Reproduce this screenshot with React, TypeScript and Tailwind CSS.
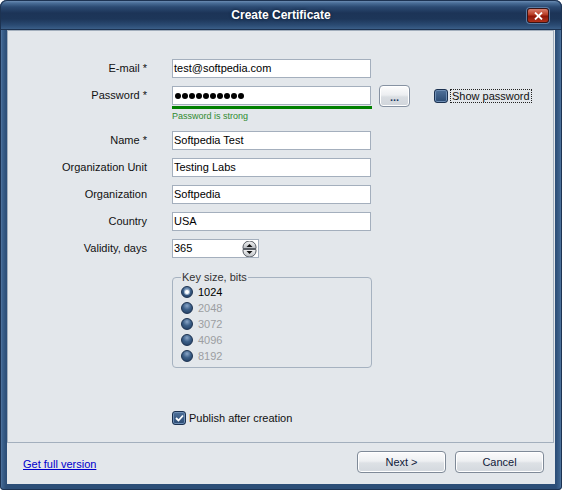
import React from "react";

function Radio({ checked }: { checked?: boolean }) {
  return (
    <span className="flex h-[12px] w-[12px] items-center justify-center rounded-full border border-[#1b3150] bg-[radial-gradient(circle_at_50%_28%,#8aa6c8_0%,#3c5f88_45%,#1f3a5e_100%)]">
      {checked && (
        <span className="h-[4px] w-[4px] rounded-full bg-white shadow-[0_0_0_1px_#9fb4cd]" />
      )}
    </span>
  );
}

function Check({ checked }: { checked?: boolean }) {
  return (
    <span className="flex h-[14px] w-[14px] items-center justify-center rounded-[3px] border border-[#1b3150] bg-[linear-gradient(to_bottom,#4f719a,#2b4b73)] shadow-[inset_0_0_0_1px_#6f8fb5]">
      {checked && (
        <svg width="9" height="8" viewBox="0 0 9 8">
          <path d="M1 4 L3.5 6.5 L8 1.5" stroke="#ffffff" strokeWidth="1.8" fill="none" />
        </svg>
      )}
    </span>
  );
}

function Row({ label, children }: { label: string; children: React.ReactNode }) {
  return (
    <div className="flex h-[19px] items-center">
      <div className="w-[139px] text-right text-[11px] text-[#111]">{label}</div>
      <div className="ml-[25px] flex items-center">{children}</div>
    </div>
  );
}

function Input({ value, w = 199 }: { value: string; w?: number }) {
  return (
    <div
      className="h-[19px] border border-[#a4afbd] bg-white pl-[1px] text-[11px] leading-[17px] text-black"
      style={{ width: w }}
    >
      {value}
    </div>
  );
}

function Btn({ children }: { children: React.ReactNode }) {
  return (
    <button className="h-[22px] w-[89px] rounded-[4px] border border-[#7f8a98] bg-[linear-gradient(to_bottom,#fbfbfc_0%,#eef0f2_45%,#dde1e5_55%,#d3d8de_100%)] text-[11px] text-[#10203a] shadow-[inset_0_0_0_1px_#ffffff]">
      {children}
    </button>
  );
}

export default function App() {
  return (
    <div className="flex h-[490px] w-[562px] flex-col rounded-t-[7px] rounded-b-[4px] bg-[linear-gradient(to_right,#6e8fb6_0px,#3f6590_2px,#2d4f78_6px,#2d4f78_556px,#3f6590_560px,#6e8fb6_562px)] font-['Liberation_Sans',Arial,sans-serif] shadow-[inset_0_0_0_1px_#1d3352]">
      {/* Title bar */}
      <div className="relative flex h-[30px] items-center justify-center rounded-t-[7px] bg-[linear-gradient(to_bottom,#7b9bc0_0px,#4a6e98_3px,#2b4a72_7px,#1c3457_13px,#1d3659_19px,#2a4a72_25px,#3e638d_30px)] shadow-[inset_0_0_0_1px_#1d3352]">
        <span className="text-[12px] font-bold text-white [text-shadow:0_0_3px_#0b1a30]">
          Create Certificate
        </span>
        <div className="absolute left-[527px] top-[8px] flex h-[15px] w-[22px] items-center justify-center rounded-[3px] border border-[#3b1414] bg-[linear-gradient(to_bottom,#d9806f_0%,#b83a22_45%,#8e1608_55%,#b0331c_100%)] shadow-[0_0_0_1px_#5d7ea5]">
          <svg width="9" height="8" viewBox="0 0 9 8">
            <path d="M1 0.5 L8 7.5 M8 0.5 L1 7.5" stroke="#ffffff" strokeWidth="1.8" />
          </svg>
        </div>
      </div>

      {/* Client area */}
      <div className="mx-[7px] mb-[6px] flex flex-1 flex-col bg-[#e3e7eb]">
        <div className="h-[413px] w-[547px] border border-[#a3afbd] pt-[28px]">
          <div className="flex flex-col gap-[8px]">
            <Row label="E-mail *">
              <Input value="test@softpedia.com" />
            </Row>
            <div className="flex flex-col">
              <Row label="Password *">
                <div className="flex h-[19px] w-[199px] items-center gap-[1px] border border-[#a4afbd] bg-white pl-[2px]">
                  {Array.from({ length: 10 }).map((_, i) => (
                    <span key={i} className="h-[6px] w-[6px] rounded-full bg-black" />
                  ))}
                </div>
                <button className="ml-[8px] flex h-[22px] w-[31px] items-end justify-center rounded-[4px] border border-[#8692a2] bg-[linear-gradient(to_bottom,#fdfdfd_0%,#eceef1_45%,#d9dde2_55%,#d0d5db_100%)] pb-[4px] text-[11px] font-bold leading-[10px] text-[#1f3a64] shadow-[inset_0_0_0_1px_#ffffff]">
                  ...
                </button>
                <div className="ml-[24px] flex items-center gap-[2px]">
                  <Check />
                  <span className="border border-dotted border-[#222] px-[1px] text-[11px] leading-[12px] text-[#111]">
                    Show password
                  </span>
                </div>
              </Row>
              <div className="ml-[164px] mt-[1px] h-[3px] w-[200px] bg-[#008000]" />
              <div className="ml-[164px] h-[14px] text-[9px] leading-[14px] text-[#2f8a2f]">
                Password is strong
              </div>
            </div>
            <Row label="Name *">
              <Input value="Softpedia Test" />
            </Row>
            <Row label="Organization Unit">
              <Input value="Testing Labs" />
            </Row>
            <Row label="Organization">
              <Input value="Softpedia" />
            </Row>
            <Row label="Country">
              <Input value="USA" />
            </Row>
            <Row label="Validity, days">
              <div className="flex h-[19px] w-[87px] items-center justify-between border border-[#a4afbd] bg-white pl-[1px] pr-[1px] text-[11px] text-black">
                <span className="leading-[17px]">365</span>
                <svg width="15" height="16" viewBox="0 0 15 16">
                  <defs>
                    <linearGradient id="sg" x1="0" y1="0" x2="0" y2="1">
                      <stop offset="0" stopColor="#f4f4f4" />
                      <stop offset="1" stopColor="#b9bdc2" />
                    </linearGradient>
                  </defs>
                  <path d="M1 7.5 V6 A6.5 6 0 0 1 14 6 V7.5 Z" fill="url(#sg)" stroke="#5a5f66" strokeWidth="1" />
                  <path d="M1 8.5 V10 A6.5 6 0 0 0 14 10 V8.5 Z" fill="url(#sg)" stroke="#5a5f66" strokeWidth="1" />
                  <path d="M4.5 6 L7.5 3 L10.5 6 Z" fill="#111" />
                  <path d="M4.5 10 L7.5 13 L10.5 10 Z" fill="#111" />
                </svg>
              </div>
            </Row>
          </div>

          {/* Key size group */}
          <div className="relative ml-[164px] mt-[19px] h-[91px] w-[200px] rounded-[4px] border border-[#a6b2c0] pl-[8px] pt-[6px]">
            <span className="absolute left-[8px] top-[-8px] bg-[#e3e7eb] px-[1px] text-[11px] leading-[14px] text-[#333]">
              Key size, bits
            </span>
            <div className="flex flex-col">
              {["1024", "2048", "3072", "4096", "8192"].map((v, i) => (
                <div key={v} className="flex h-[16px] items-center gap-[5px]">
                  <Radio checked={i === 0} />
                  <span className={`text-[11px] ${i === 0 ? "text-black" : "text-[#9c9ea2]"}`}>{v}</span>
                </div>
              ))}
            </div>
          </div>

          <div className="ml-[164px] mt-[42px] flex items-center gap-[3px]">
            <Check checked />
            <span className="text-[11px] text-[#111]">Publish after creation</span>
          </div>
        </div>

        {/* Bottom bar */}
        <div className="flex h-[41px] items-start justify-between pl-[16px] pr-[11px] pt-[8px]">
          <a className="mt-[7px] text-[11px] leading-[13px] text-[#0000cc] underline">Get full version</a>
          <div className="flex gap-[9px]">
            <Btn>Next &gt;</Btn>
            <Btn>Cancel</Btn>
          </div>
        </div>
      </div>
    </div>
  );
}
